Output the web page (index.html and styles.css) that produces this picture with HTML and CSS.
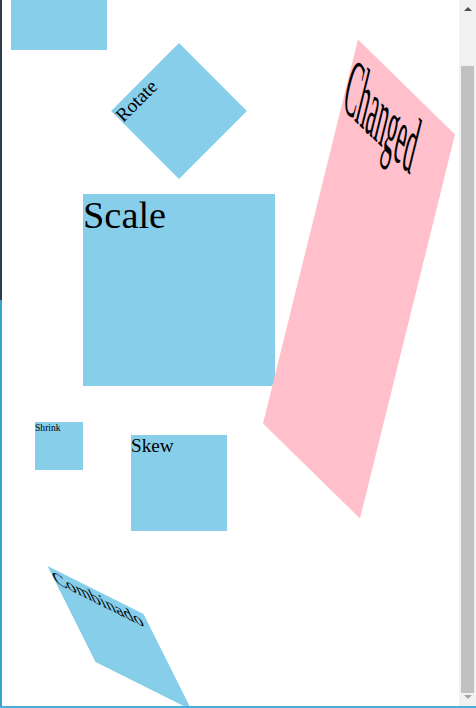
FILE: index.html
```html
<!DOCTYPE html>
<html lang="es">
<head>
<meta charset="utf-8">
<title>Transformaciones</title>
<link rel="stylesheet" href="styles.css">
</head>
<body>
<div class="page">
  <div class="box"></div>
  <div class="box rotate">Rotate</div>
  <div class="row row-scale">
    <div class="box scale">Scale</div>
    <div class="box changed">Changed</div>
  </div>
  <div class="row row-shrink">
    <div class="box shrink">Shrink</div>
    <div class="box skew">Skew</div>
  </div>
  <div class="box combined">Combinado</div>
</div>
<div class="scrollbar" aria-hidden="true">
  <div class="sb-btn"><span class="arrow-up"></span></div>
  <div class="sb-track"><div class="sb-thumb"></div></div>
  <div class="sb-btn sb-btn-down"><span class="arrow-down"></span></div>
</div>
<script src="script.js"></script>
</body>
</html>
```

FILE: styles.css
```css
html, body {
  margin: 0;
  padding: 0;
  background: #ffffff;
}

body {
  font-family: "Liberation Serif", "Times New Roman", serif;
  font-size: 19.2px;
  color: #000000;
}

body::before {
  content: "";
  position: fixed;
  left: 0;
  top: 0;
  width: 2px;
  height: 100%;
  background: linear-gradient(to bottom, #2c3e48 0, #2c3e48 300px, #3a9fc9 300px, #3a9fc9 100%);
  z-index: 10;
}

body::after {
  content: "";
  position: fixed;
  left: 0;
  right: 0;
  bottom: 0;
  height: 2px;
  background: #45b0dc;
  z-index: 10;
}

.page {
  display: flex;
  flex-direction: column;
  align-items: flex-start;
  padding: 8px 0 22px 11px;
}

.box {
  width: 96px;
  height: 96px;
  flex: none;
  background: #87ceeb;
  line-height: 1.15;
}

.rotate {
  margin-top: 13px;
  margin-left: 120px;
  transform: rotate(-45deg);
}

.row {
  display: flex;
  align-items: flex-start;
}

.row-scale {
  margin-top: 83px;
  margin-left: 120px;
  gap: 84px;
}

.scale {
  transform: scale(2);
}

.changed {
  background: #ffc0cb;
  transform: matrix(1.0104, 0.9896, -0.9896, 4.0, 0, -11);
}

.row-shrink {
  margin-top: 60px;
  gap: 24px;
}

.shrink {
  transform: scale(0.5);
}

.skew {
  margin-top: 37px;
}

.combined {
  margin-top: 59px;
  transform: translate(60.5px, 0) skew(26.57deg, 26.57deg);
}

/* drawn window scrollbar */
.scrollbar {
  position: fixed;
  top: 0;
  right: 0;
  width: 17px;
  height: 100%;
  background: #f1f1f1;
  display: flex;
  flex-direction: column;
  z-index: 5;
}

.sb-btn {
  height: 17px;
  flex: none;
  display: flex;
  align-items: center;
  justify-content: center;
}

.sb-btn-down {
  height: 15px;
  align-items: flex-start;
  padding-top: 2px;
  box-sizing: border-box;
}

.arrow-up {
  width: 0;
  height: 0;
  border-left: 4px solid transparent;
  border-right: 4px solid transparent;
  border-bottom: 4px solid #505050;
}

.arrow-down {
  width: 0;
  height: 0;
  border-left: 4px solid transparent;
  border-right: 4px solid transparent;
  border-top: 4px solid #a3a3a3;
}

.sb-track {
  flex: 1;
  display: flex;
  flex-direction: column;
  align-items: center;
}

.sb-thumb {
  margin-top: 49px;
  width: 13px;
  height: 627px;
  background: #c1c1c1;
}
```

FILE: script.js
```js
window.scrollTo(0, 54);
```
